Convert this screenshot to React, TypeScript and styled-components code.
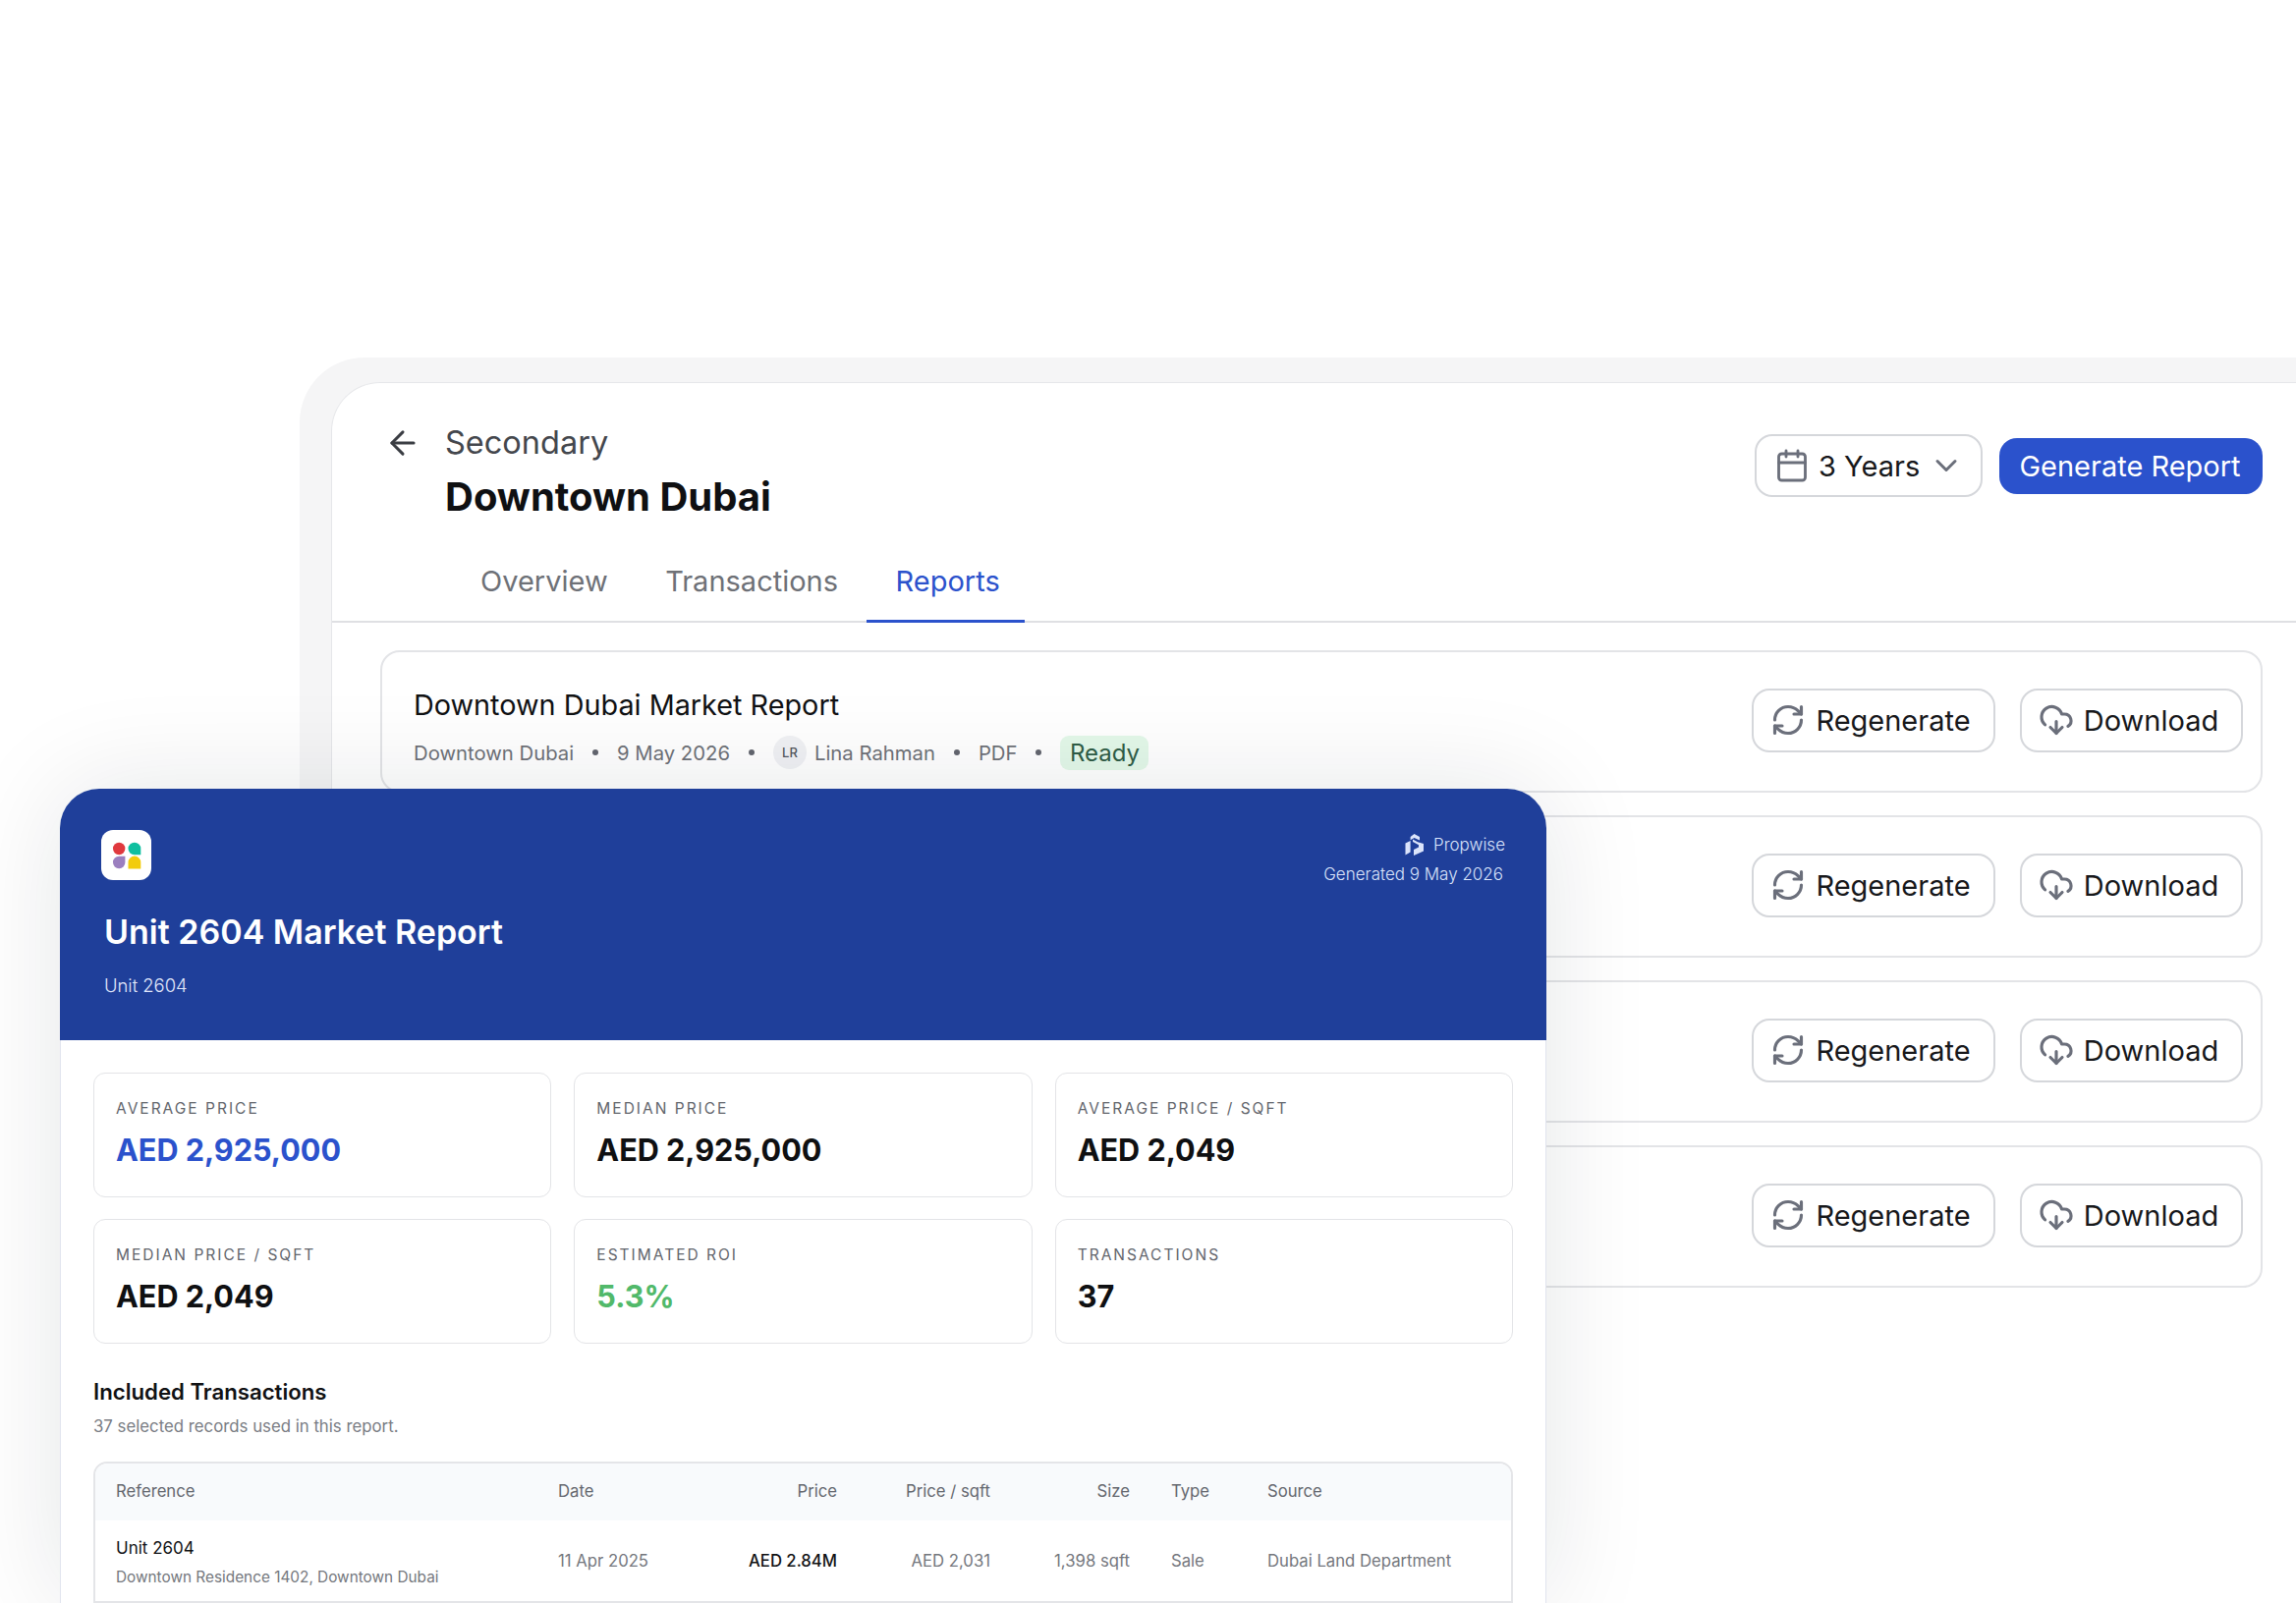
import React from 'react';
import styled, { createGlobalStyle } from 'styled-components';
import { ArrowLeft, Calendar, ChevronDown, CloudDownload, RefreshCw } from 'lucide-react';

const GlobalStyle = createGlobalStyle`
  html, body {
    margin: 0;
    padding: 0;
    background: #fff;
  }
  * {
    box-sizing: border-box;
  }
  body {
    font-family: Inter, "Liberation Sans", sans-serif;
    color: #111214;
  }
`;

const Page = styled.div`
  position: relative;
  width: 2337px;
  height: 1632px;
  overflow: hidden;
  background: #fff;
  padding: 364px 0 0 305px;
`;

const Frame = styled.div`
  height: 100%;
  padding: 25px 0 0 32px;
  background: #f5f5f6;
  border-top-left-radius: 66px;
`;

const Panel = styled.section`
  height: 100%;
  background: #fff;
  border: 1px solid #e6e7ea;
  border-width: 1px 0 0 1px;
  border-top-left-radius: 50px;
`;

const Header = styled.header`
  display: flex;
  justify-content: space-between;
  align-items: flex-start;
  padding: 41px 34px 0 53px;
`;

const HeaderLeft = styled.div`
  display: flex;
  gap: 24px;
`;

const BackIcon = styled.div`
  display: flex;
  align-items: center;
  height: 40px;
  color: #3a3d43;
`;

const Eyebrow = styled.div`
  font-size: 32.5px;
  line-height: 40px;
  color: #44474d;
`;

const PageTitle = styled.h1`
  margin: 11px 0 0;
  font-size: 40px;
  line-height: 48px;
  font-weight: 700;
  color: #0f1012;
`;

const Actions = styled.div`
  display: flex;
  align-items: center;
  gap: 17px;
  margin-top: 11px;
`;

const RangeSelect = styled.div`
  display: flex;
  align-items: center;
  width: 232px;
  height: 64px;
  padding-left: 18px;
  border: 2px solid #d5d7db;
  border-radius: 18px;
  font-size: 29px;
  color: #17181b;
  svg {
    flex: none;
    color: #6b6f7b;
  }
  span {
    margin: 0 9px 0 9px;
  }
`;

const PrimaryButton = styled.button`
  width: 268px;
  height: 57px;
  padding: 0 2px 0 0;
  border: 0;
  border-radius: 18px;
  background: #2b52cc;
  color: #fff;
  font: 400 29px/1 Inter, sans-serif;
`;

const Tabs = styled.nav`
  display: flex;
  gap: 3.5px;
  margin-top: 19px;
  padding-left: 121px;
  border-bottom: 2px solid #dfe0e3;
`;

const Tab = styled.div<{ $active?: boolean }>`
  padding: 23px 25px 19px 30px;
  margin-bottom: -2px;
  font-size: 29px;
  line-height: 40px;
  color: ${(p) => (p.$active ? '#2b52cc' : '#6e7177')};
  border-bottom: 3px solid ${(p) => (p.$active ? '#2b52cc' : 'transparent')};
`;

const ReportList = styled.div`
  display: flex;
  flex-direction: column;
  gap: 23px;
  padding: 28px 34px 0 49px;
`;

const ReportRow = styled.article`
  display: flex;
  justify-content: space-between;
  align-items: center;
  height: 145px;
  padding: 0 18px 0 32px;
  border: 2px solid #e3e4e7;
  border-radius: 20px;
`;

const ReportInfo = styled.div`
  margin-top: 12px;
`;

const ReportTitle = styled.div`
  font-size: 28.8px;
  line-height: 40px;
  color: #111214;
`;

const ReportMeta = styled.div`
  display: flex;
  align-items: center;
  gap: 19px;
  margin-top: 11px;
  height: 35px;
  font-size: 20.3px;
  color: #6f7278;
`;

const Dot = styled.i`
  width: 6px;
  height: 6px;
  border-radius: 50%;
  background: #63666f;
`;

const Author = styled.div`
  display: flex;
  align-items: center;
  gap: 8px;
`;

const Avatar = styled.div`
  display: flex;
  align-items: center;
  justify-content: center;
  width: 34px;
  height: 34px;
  border-radius: 50%;
  background: #f0f1f4;
  font-size: 13px;
  font-weight: 500;
  color: #54575e;
`;

const StatusPill = styled.div`
  display: flex;
  align-items: center;
  justify-content: center;
  width: 90px;
  height: 35px;
  border-radius: 9px;
  background: #e3f8e9;
  font-size: 24px;
  color: #2f5d46;
`;

const RowActions = styled.div`
  display: flex;
  gap: 25px;
  margin: 0 0 3px auto;
`;

const GhostButton = styled.button<{ $width: number }>`
  display: flex;
  align-items: center;
  justify-content: center;
  gap: 10px;
  width: ${(p) => p.$width}px;
  height: 65px;
  padding: 0 6px 0 0;
  border: 2px solid #d5d7db;
  border-radius: 18px;
  background: #fff;
  font: 400 29px/1 Inter, sans-serif;
  color: #17181b;
  svg {
    flex: none;
    color: #6b6f7b;
  }
`;

const ReportCard = styled.section`
  position: absolute;
  left: 61px;
  top: 803px;
  width: 1513px;
  height: 829px;
  overflow: hidden;
  background: #fff;
  border-radius: 40px 40px 0 0;
  box-shadow: 0 0 110px rgba(20, 24, 40, 0.11);
`;

const CardHeader = styled.header`
  display: flex;
  justify-content: space-between;
  height: 256px;
  padding: 42px 42px 0 42px;
  background: #1f3f9a;
  color: #fff;
`;

const LogoTile = styled.div`
  display: flex;
  align-items: center;
  justify-content: center;
  width: 51px;
  height: 51px;
  border-radius: 12px;
  background: #fff;
`;

const CardTitle = styled.h2`
  margin: 31px 0 0 3px;
  font-size: 34px;
  line-height: 44px;
  font-weight: 600;
`;

const CardSubtitle = styled.div`
  margin: 18px 0 0 3px;
  font-size: 18.4px;
  line-height: 28px;
  font-weight: 300;
  color: #e2e8fb;
`;

const CardHeaderRight = styled.div`
  display: flex;
  flex-direction: column;
  align-items: flex-end;
  gap: 4px;
  padding-top: 2px;
  font-size: 17px;
  line-height: 26px;
  font-weight: 300;
  color: #dbe4fb;
`;

const Brand = styled.div`
  display: flex;
  align-items: center;
  gap: 9px;
`;

const GeneratedAt = styled.div`
  margin-right: 2px;
`;

const CardBody = styled.div`
  height: 573px;
  padding: 33px 33px 0;
  border: 1px solid #e1e4ee;
  border-width: 0 1px;
`;

const StatGrid = styled.div`
  display: grid;
  grid-template-columns: repeat(3, 1fr);
  gap: 22px 23px;
`;

const StatCard = styled.div`
  height: 127px;
  padding: 26px 22px 0;
  border: 1.5px solid #e3e4e7;
  border-radius: 12px;
`;

const StatLabel = styled.div`
  font-size: 15.5px;
  line-height: 20px;
  letter-spacing: 2px;
  color: #62656c;
`;

const StatValue = styled.div<{ $tone?: 'blue' | 'green' }>`
  margin-top: 12px;
  font-size: 30.6px;
  line-height: 40px;
  font-weight: 700;
  color: ${(p) => (p.$tone === 'blue' ? '#2b52cc' : p.$tone === 'green' ? '#51b96a' : '#0f1012')};
`;

const SectionTitle = styled.h3`
  margin: 34px 0 0;
  font-size: 22.2px;
  line-height: 30px;
  font-weight: 600;
  color: #111214;
`;

const SectionNote = styled.p`
  margin: 8px 0 0;
  font-size: 16.8px;
  line-height: 24px;
  color: #7a7d84;
`;

const Table = styled.div`
  height: 144px;
  margin-top: 24px;
  border: 2px solid #e4e5e8;
  border-radius: 14px 14px 0 0;
  overflow: hidden;
`;

const TableRow = styled.div<{ $head?: boolean }>`
  display: grid;
  grid-template-columns: 450px 150px 134px 156px 142px 140px 1fr;
  align-items: center;
  height: ${(p) => (p.$head ? 58 : 83)}px;
  padding: ${(p) => (p.$head ? '0 0 3px 21px' : '0 0 2px 21px')};
  background: ${(p) => (p.$head ? '#f8fafc' : '#fff')};
  font-size: 16.7px;
  color: ${(p) => (p.$head ? '#64676e' : '#74777d')};
`;

const Cell = styled.div<{ $right?: boolean; $inset?: boolean; $strong?: boolean }>`
  text-align: ${(p) => (p.$right ? 'right' : 'left')};
  padding-left: ${(p) => (p.$inset ? 42 : 0)}px;
  font-weight: ${(p) => (p.$strong ? 500 : 400)};
  color: ${(p) => (p.$strong ? '#111214' : 'inherit')};
`;

const RefCell = styled.div`
  margin-top: 5px;
`;

const RefName = styled.div`
  font-size: 17px;
  line-height: 24px;
  color: #111214;
`;

const RefPlace = styled.div`
  margin-top: 6px;
  font-size: 15.35px;
  line-height: 24px;
  color: #74777d;
`;

const Logo = () => (
  <svg width="30" height="28" viewBox="0 0 30 28">
    <circle cx="7.2" cy="7" r="6.2" fill="#e0393e" />
    <path d="M16.5 7a6.4 6.2 0 0 1 12.8 0v6.2h-6.4a6.4 6.2 0 0 1-6.4-6.2z" fill="#0fbf9f" />
    <path d="M1 21a6.2 6.2 0 0 1 6.2-6.2h6.2V21a6.2 6.2 0 0 1-12.4 0z" fill="#9b7fbf" />
    <path d="M16.5 21a6.4 6.4 0 0 1 12.8 0v6.4H16.5z" fill="#f2cc0c" />
  </svg>
);

const BrandMark = () => (
  <svg width="20" height="22" viewBox="0 0 20 22" fill="#dbe4fb">
    <path d="M9.5 0l5.5 3v3.6L9.5 4 5.6 6.2V3z" />
    <path d="M0.5 9.5L5.6 7v11.6L0.5 21.5z" />
    <path d="M8 5.6l5 2.6 6 1.8v7.4L9 22v-6l5-2.6v-2.2L8 8z" />
  </svg>
);

// only the first row is not covered by the report card
const reports = [{ id: 1, visible: true }, { id: 2 }, { id: 3 }, { id: 4 }];

const stats: { label: string; value: string; tone?: 'blue' | 'green' }[] = [
  { label: 'AVERAGE PRICE', value: 'AED 2,925,000', tone: 'blue' },
  { label: 'MEDIAN PRICE', value: 'AED 2,925,000' },
  { label: 'AVERAGE PRICE / SQFT', value: 'AED 2,049' },
  { label: 'MEDIAN PRICE / SQFT', value: 'AED 2,049' },
  { label: 'ESTIMATED ROI', value: '5.3%', tone: 'green' },
  { label: 'TRANSACTIONS', value: '37' },
];

export default function App() {
  return (
    <Page>
      <GlobalStyle />
      <Frame>
        <Panel>
          <Header>
            <HeaderLeft>
              <BackIcon>
                <ArrowLeft size={38} strokeWidth={1.9} />
              </BackIcon>
              <div>
                <Eyebrow>Secondary</Eyebrow>
                <PageTitle>Downtown Dubai</PageTitle>
              </div>
            </HeaderLeft>
            <Actions>
              <RangeSelect>
                <Calendar size={36} strokeWidth={1.9} />
                <span>3 Years</span>
                <ChevronDown size={36} strokeWidth={2} />
              </RangeSelect>
              <PrimaryButton>Generate Report</PrimaryButton>
            </Actions>
          </Header>
          <Tabs>
            <Tab>Overview</Tab>
            <Tab>Transactions</Tab>
            <Tab $active>Reports</Tab>
          </Tabs>
          <ReportList>
            {reports.map((r) => (
              <ReportRow key={r.id}>
                {r.visible && (
                  <ReportInfo>
                    <ReportTitle>Downtown Dubai Market Report</ReportTitle>
                    <ReportMeta>
                      <span>Downtown Dubai</span>
                      <Dot />
                      <span>9 May 2026</span>
                      <Dot />
                      <Author>
                        <Avatar>LR</Avatar>
                        <span>Lina Rahman</span>
                      </Author>
                      <Dot />
                      <span>PDF</span>
                      <Dot />
                      <StatusPill>Ready</StatusPill>
                    </ReportMeta>
                  </ReportInfo>
                )}
                <RowActions>
                  <GhostButton $width={248}>
                    <RefreshCw size={36} strokeWidth={2.1} />
                    Regenerate
                  </GhostButton>
                  <GhostButton $width={227}>
                    <CloudDownload size={36} strokeWidth={2.1} />
                    Download
                  </GhostButton>
                </RowActions>
              </ReportRow>
            ))}
          </ReportList>
        </Panel>
      </Frame>
      <ReportCard>
        <CardHeader>
          <div>
            <LogoTile>
              <Logo />
            </LogoTile>
            <CardTitle>Unit 2604 Market Report</CardTitle>
            <CardSubtitle>Unit 2604</CardSubtitle>
          </div>
          <CardHeaderRight>
            <Brand>
              <BrandMark />
              Propwise
            </Brand>
            <GeneratedAt>Generated 9 May 2026</GeneratedAt>
          </CardHeaderRight>
        </CardHeader>
        <CardBody>
          <StatGrid>
            {stats.map((s) => (
              <StatCard key={s.label}>
                <StatLabel>{s.label}</StatLabel>
                <StatValue $tone={s.tone}>{s.value}</StatValue>
              </StatCard>
            ))}
          </StatGrid>
          <SectionTitle>Included Transactions</SectionTitle>
          <SectionNote>37 selected records used in this report.</SectionNote>
          <Table>
            <TableRow $head>
              <Cell>Reference</Cell>
              <Cell>Date</Cell>
              <Cell $right>Price</Cell>
              <Cell $right>Price / sqft</Cell>
              <Cell $right>Size</Cell>
              <Cell $inset>Type</Cell>
              <Cell>Source</Cell>
            </TableRow>
            <TableRow>
              <RefCell>
                <RefName>Unit 2604</RefName>
                <RefPlace>Downtown Residence 1402, Downtown Dubai</RefPlace>
              </RefCell>
              <Cell>11 Apr 2025</Cell>
              <Cell $right $strong>AED 2.84M</Cell>
              <Cell $right>AED 2,031</Cell>
              <Cell $right>1,398 sqft</Cell>
              <Cell $inset>Sale</Cell>
              <Cell>Dubai Land Department</Cell>
            </TableRow>
          </Table>
        </CardBody>
      </ReportCard>
    </Page>
  );
}
